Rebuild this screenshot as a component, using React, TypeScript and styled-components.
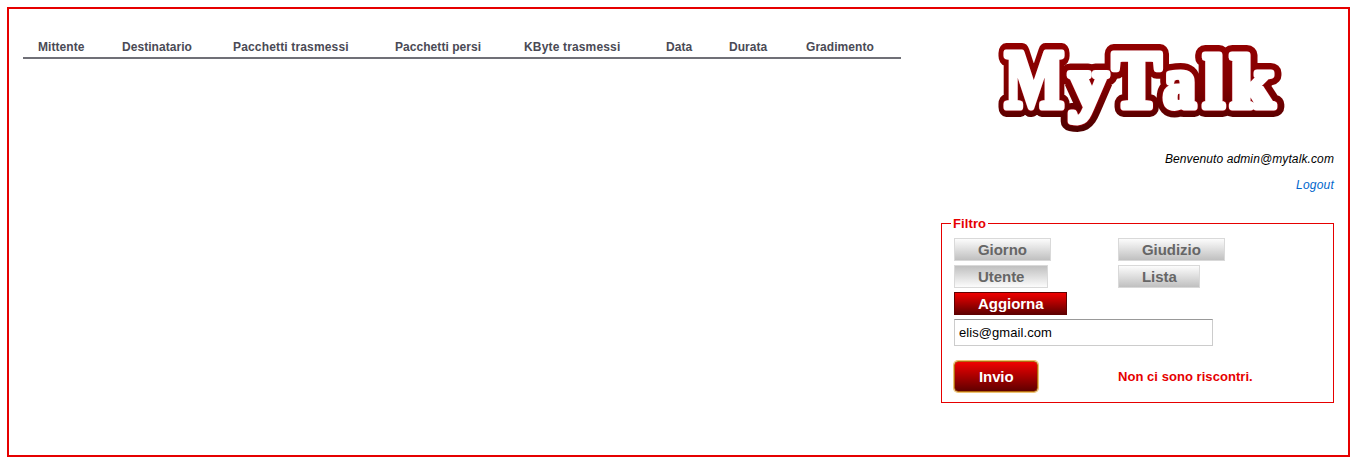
import React from "react";
import styled, { createGlobalStyle, css } from "styled-components";

const GlobalStyle = createGlobalStyle`
  * { box-sizing: border-box; }
  body {
    margin: 0;
    background: #fff;
    font-family: "Liberation Sans", Arial, sans-serif;
  }
`;

const Frame = styled.div`
  display: flex;
  width: 1343px;
  height: 450px;
  margin: 7px;
  padding: 14px;
  border: 2px solid #e60000;
`;

const Main = styled.main`
  width: 878px;
  padding-top: 13px;
`;

const CallTable = styled.table`
  width: 878px;
  table-layout: fixed;
  border-collapse: collapse;
`;

const HeadCell = styled.th<{ $width: number }>`
  width: ${(p) => p.$width}px;
  height: 22px;
  padding: 4px 0 3px 15px;
  border-bottom: 2px solid #707077;
  color: #4a4a55;
  font-size: 12px;
  letter-spacing: ${(p) => (p.$width > 140 ? 0.16 : 0.05)}px;
  line-height: 14px;
  text-align: left;
  vertical-align: top;
  white-space: nowrap;
`;

const Sidebar = styled.aside`
  width: 393px;
  margin-left: 40px;
  padding-top: 4px;
`;

const Logo = styled.svg`
  display: block;
  margin-left: 49px;
  font-family: "Liberation Serif", "Times New Roman", serif;
  font-weight: bold;
`;

const Welcome = styled.p`
  margin: 15px 0 0;
  font-size: 12px;
  font-style: italic;
  letter-spacing: 0.11px;
  line-height: 14px;
  text-align: right;
`;

const Logout = styled.a`
  display: block;
  margin-top: 12px;
  color: #0066cc;
  font-size: 12px;
  font-style: italic;
  letter-spacing: 0.2px;
  line-height: 14px;
  text-align: right;
`;

const Filter = styled.fieldset`
  height: 187px;
  margin: 24px 0 0;
  padding: 7px 12px 0;
  border: 1px solid #e60000;
`;

const Legend = styled.legend`
  width: 37px;
  margin-left: -3px;
  padding: 0 2px;
  color: #e60000;
  font-size: 13px;
  font-weight: bold;
  letter-spacing: 0.1px;
  line-height: 15px;
  white-space: nowrap;
`;

const Options = styled.div`
  display: grid;
  grid-template-columns: 164px 1fr;
  row-gap: 4px;
  justify-items: start;
`;

const redFill = css`
  background: linear-gradient(#f00000, #600000);
  color: #fff;
`;

const Toggle = styled.button<{ $width: number; $kind?: "pressed" | "primary" }>`
  width: ${(p) => p.$width}px;
  height: 23px;
  padding: 0 0 0 23px;
  border: 1px solid ${(p) => (p.$kind === "primary" ? "#600000" : "#d9d9d9")};
  background: ${(p) =>
    p.$kind === "pressed"
      ? "linear-gradient(#c0c0c0, #fcfcfc)"
      : "linear-gradient(#fcfcfc, #c0c0c0)"};
  color: #666;
  font: bold 15px/21px "Liberation Sans", Arial, sans-serif;
  letter-spacing: -0.05px;
  text-align: left;
  ${(p) => p.$kind === "primary" && redFill}
`;

const EmailInput = styled.input`
  display: block;
  width: 259px;
  height: 27px;
  margin-top: 4px;
  padding: 0 4px;
  border: 1px solid #ccc;
  border-top-color: #999;
  color: #000;
  font: 13px "Liberation Sans", Arial, sans-serif;
  letter-spacing: 0.07px;
`;

const SubmitRow = styled.div`
  display: grid;
  grid-template-columns: 164px 1fr;
  align-items: center;
  justify-items: start;
  margin-top: 15px;
`;

const Submit = styled.button`
  width: 84px;
  height: 31px;
  padding: 0 0 0 24px;
  border: 1px solid #b06a10;
  border-radius: 4px;
  box-shadow: 0 0 0 1px #efc271;
  font: bold 15px/29px "Liberation Sans", Arial, sans-serif;
  letter-spacing: -0.1px;
  text-align: left;
  ${redFill}
`;

const Message = styled.strong`
  color: #e60000;
  font-size: 13px;
  letter-spacing: 0.05px;
  line-height: 15px;
`;

const columns = [
  { label: "Mittente", width: 84 },
  { label: "Destinatario", width: 111 },
  { label: "Pacchetti trasmessi", width: 162 },
  { label: "Pacchetti persi", width: 129 },
  { label: "KByte trasmessi", width: 142 },
  { label: "Data", width: 63 },
  { label: "Durata", width: 77 },
  { label: "Gradimento", width: 110 },
];

const letters = [
  { char: "M", x: 15, size: 82, stretch: 0.76 },
  { char: "y", x: 79.5, size: 72, stretch: 1.06 },
  { char: "T", x: 122.5, size: 81, stretch: 0.9 },
  { char: "a", x: 173.5, size: 72, stretch: 0.89 },
  { char: "l", x: 213.5, size: 74, stretch: 1.0 },
  { char: "k", x: 240.3, size: 74, stretch: 1.06 },
];

type Letter = (typeof letters)[number];

const Glyph = ({ letter, ...paint }: { letter: Letter } & React.SVGProps<SVGTextElement>) => (
  <text
    fontSize={letter.size}
    transform={`translate(${letter.x} 71.5) scale(${letter.stretch} 1)`}
    {...paint}
  >
    {letter.char}
  </text>
);

const MyTalkLogo = () => (
  <Logo width="300" height="110" viewBox="0 -8 300 110" role="img" aria-label="MyTalk">
    <defs>
      <linearGradient id="wine" gradientUnits="userSpaceOnUse" x1="0" y1="-64" x2="0" y2="22">
        <stop offset="0" stopColor="#930000" />
        <stop offset="0.5" stopColor="#800000" />
        <stop offset="1" stopColor="#500000" />
      </linearGradient>
    </defs>
    <g fill="url(#wine)" stroke="url(#wine)" strokeWidth="20" strokeLinejoin="round">
      {letters.map((l) => (
        <Glyph key={l.char} letter={l} />
      ))}
    </g>
    <g strokeLinejoin="round">
      {letters.map((l) => (
        <React.Fragment key={l.char}>
          <Glyph letter={l} fill="#950008" stroke="#950008" strokeWidth="8.5" />
          <Glyph letter={l} fill="#fff" stroke="#fff" strokeWidth="6.8" />
        </React.Fragment>
      ))}
    </g>
  </Logo>
);

export default function App() {
  return (
    <>
      <GlobalStyle />
      <Frame>
        <Main>
          <CallTable>
            <thead>
              <tr>
                {columns.map((c) => (
                  <HeadCell key={c.label} $width={c.width}>
                    {c.label}
                  </HeadCell>
                ))}
              </tr>
            </thead>
          </CallTable>
        </Main>
        <Sidebar>
          <MyTalkLogo />
          <Welcome>Benvenuto admin@mytalk.com</Welcome>
          <Logout>Logout</Logout>
          <Filter>
            <Legend>Filtro</Legend>
            <Options>
              <Toggle $width={97}>Giorno</Toggle>
              <Toggle $width={107}>Giudizio</Toggle>
              <Toggle $width={94} $kind="pressed">Utente</Toggle>
              <Toggle $width={82}>Lista</Toggle>
              <Toggle $width={113} $kind="primary">Aggiorna</Toggle>
            </Options>
            <EmailInput defaultValue="elis@gmail.com" />
            <SubmitRow>
              <Submit>Invio</Submit>
              <Message>Non ci sono riscontri.</Message>
            </SubmitRow>
          </Filter>
        </Sidebar>
      </Frame>
    </>
  );
}
